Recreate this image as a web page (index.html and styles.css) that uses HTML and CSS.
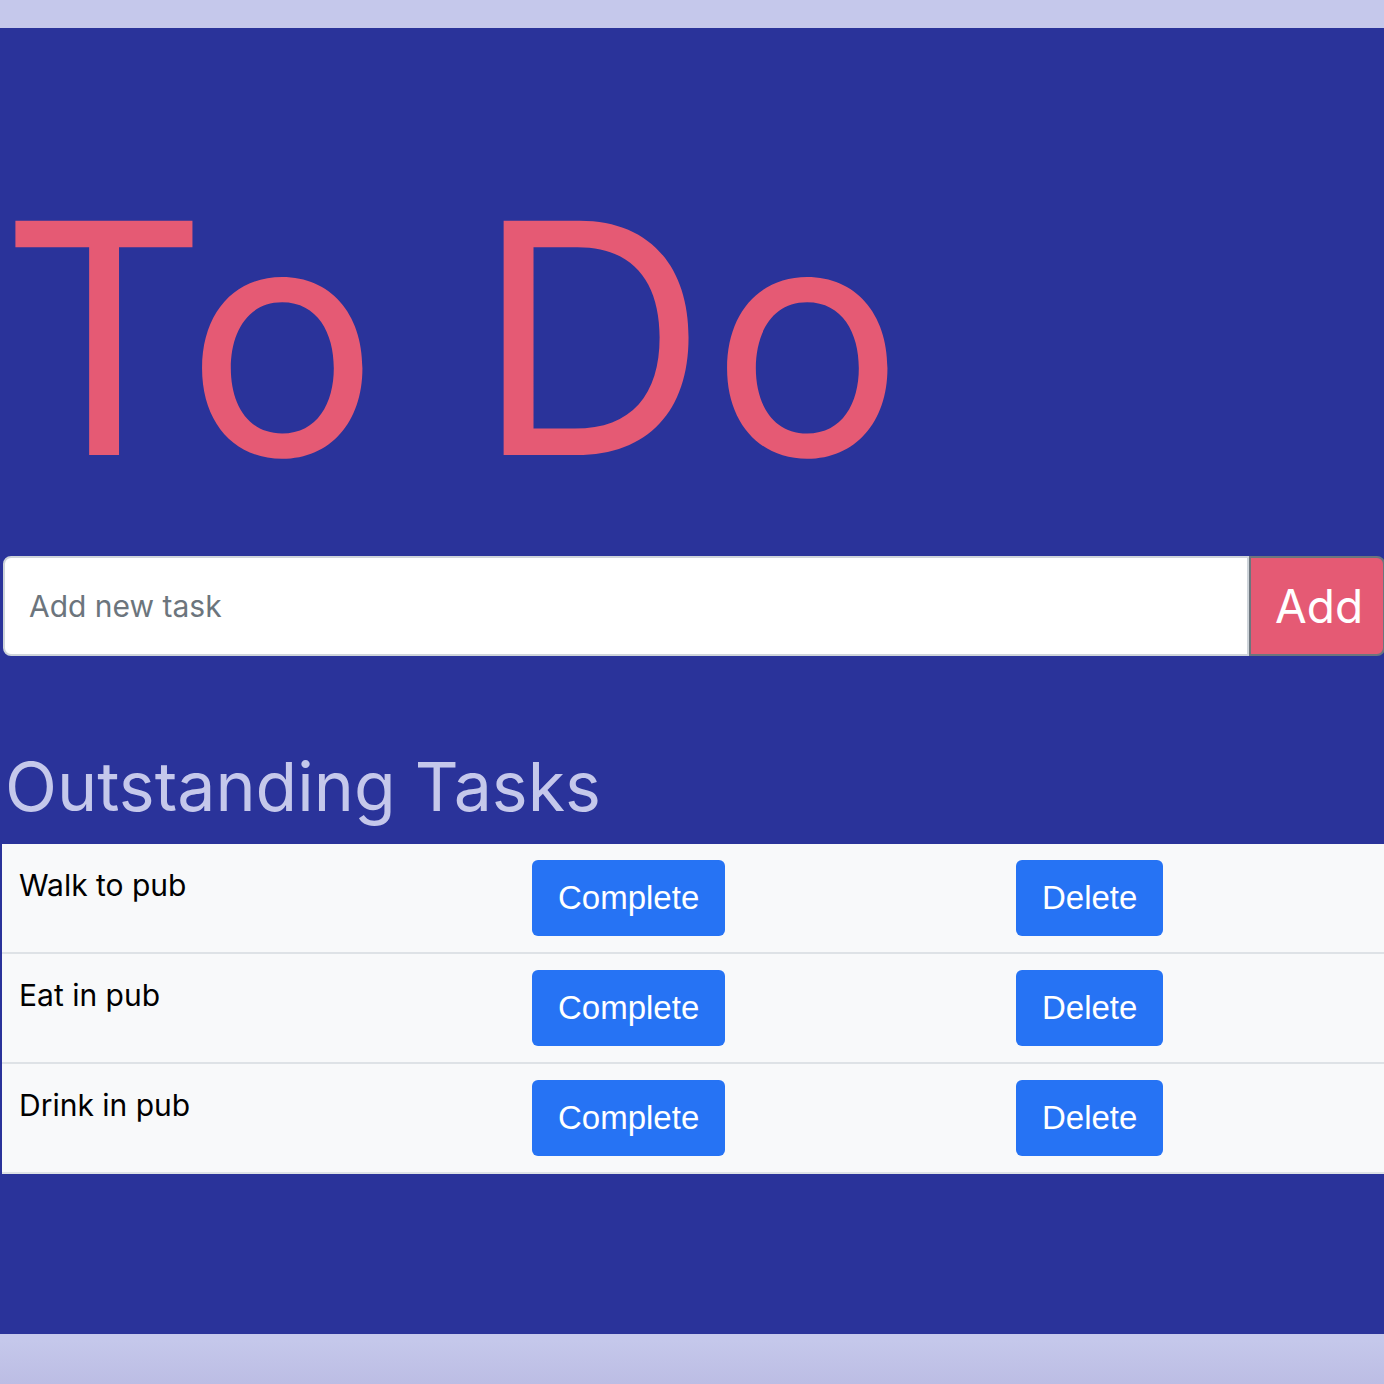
FILE: index.html
```html
<!DOCTYPE html>
<html lang="en">
<head>
<meta charset="utf-8">
<title>To Do</title>
<link rel="stylesheet" href="styles.css">
</head>
<body>
<main class="app">
  <h1 class="title">To Do</h1>
  <form class="add-form">
    <input class="add-input" type="text" placeholder="Add new task">
    <button class="add-btn" type="button">Add</button>
  </form>
  <h2 class="section-title">Outstanding Tasks</h2>
  <div class="tasks">
    <div class="task-row">
      <div class="task-name">Walk to pub</div>
      <div class="task-cell"><button class="btn" type="button">Complete</button></div>
      <div class="task-cell"><button class="btn" type="button">Delete</button></div>
    </div>
    <div class="task-row">
      <div class="task-name">Eat in pub</div>
      <div class="task-cell"><button class="btn" type="button">Complete</button></div>
      <div class="task-cell"><button class="btn" type="button">Delete</button></div>
    </div>
    <div class="task-row">
      <div class="task-name">Drink in pub</div>
      <div class="task-cell"><button class="btn" type="button">Complete</button></div>
      <div class="task-cell"><button class="btn" type="button">Delete</button></div>
    </div>
  </div>
</main>
</body>
</html>
```
FILE: styles.css
```css
html, body {
  margin: 0;
  padding: 0;
}
body {
  background: linear-gradient(#c5c8eb 0, #c5c8eb 1340px, #bcbde4 1384px);
  min-height: 1384px;
  padding-top: 28px;
  box-sizing: border-box;
  font-family: Inter, "Liberation Sans", sans-serif;
  overflow: hidden;
}
.app {
  background: #2a339a;
  height: 1306px;
  box-sizing: border-box;
  padding-top: 1px;
}
.title {
  margin: 148px 0 0 0;
  font-family: Inter, sans-serif;
  font-weight: 400;
  font-size: 322px;
  line-height: 1;
  letter-spacing: 3px;
  color: #e55a74;
}
.add-form {
  display: flex;
  margin: 57px 0 0 3px;
  height: 100px;
  width: 1400px;
}
.add-input {
  flex: 0 0 1246px;
  box-sizing: border-box;
  border: 2px solid #ced4da;
  border-radius: 8px 0 0 8px;
  background: #fff;
  font-family: Inter, sans-serif;
  font-size: 30px;
  padding: 0 24px;
  color: #212529;
  outline: none;
}
.add-input::placeholder {
  color: #6c757d;
}
.add-btn {
  flex: 0 0 136px;
  box-sizing: border-box;
  background: #e55a74;
  border: 2px solid #6c757d;
  border-radius: 0 8px 8px 0;
  color: #fff;
  font-family: Inter, sans-serif;
  font-size: 46px;
  padding: 0 0 0 24px;
  text-align: left;
}
.section-title {
  margin: 96px 0 0 5px;
  font-family: Inter, sans-serif;
  font-weight: 400;
  font-size: 68px;
  line-height: 1;
  color: #c5c8eb;
  height: 92px;
}
.tasks {
  margin-left: 2px;
  background: #f8f9fa;
}
.task-row {
  display: grid;
  grid-template-columns: 514px 484px 1fr;
  border-bottom: 2px solid #dee2e6;
  height: 110px;
  box-sizing: border-box;
}
.task-name {
  padding: 20px 17px 0;
  font-size: 30px;
  color: #000;
  line-height: 1.4;
  font-family: Inter, sans-serif;
}
.task-cell {
  padding: 16px;
}
.btn {
  background: #2673f4;
  color: #fff;
  border: none;
  border-radius: 6px;
  height: 76px;
  padding: 0 26px;
  font-family: "Liberation Sans", Arial, sans-serif;
  font-size: 33px;
}
```
